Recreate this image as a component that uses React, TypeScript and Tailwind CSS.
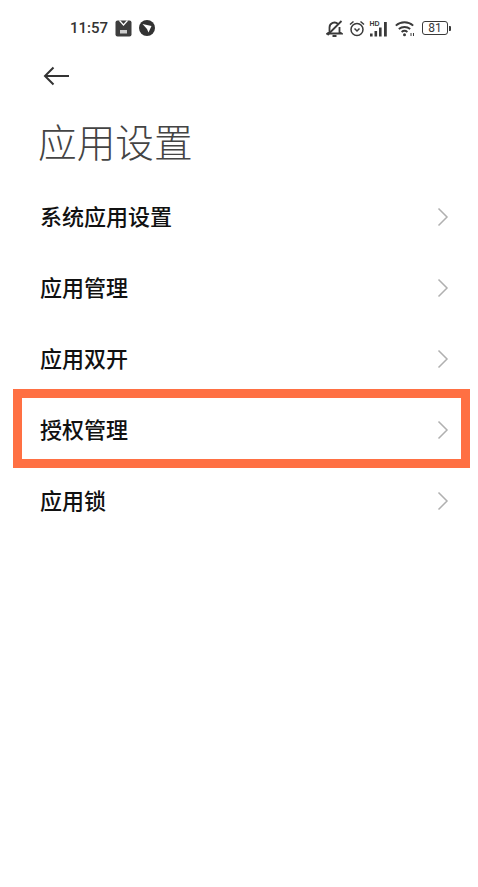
const CJK = 'font-["Noto_Sans_CJK_SC",sans-serif]';

function Chevron() {
  return (
    <svg width="12" height="20" viewBox="0 0 12 20" fill="none" className="mt-[4px] shrink-0">
      <path d="M1.5 1.5 L10 10 L1.5 18.5" stroke="#b0b0b0" strokeWidth="1.5" />
    </svg>
  );
}

function Row({ label, boxed }: { label: string; boxed?: boolean }) {
  const row = (
    <div className="flex h-[71px] items-center justify-between pl-10 pr-[29px]">
      <span className={`${CJK} text-[22px] leading-none font-medium text-[#111]`}>{label}</span>
      <Chevron />
    </div>
  );
  if (!boxed) return row;
  return (
    <div className="relative">
      {row}
      <div className="absolute left-[13px] top-[-3px] h-[79px] w-[457px] border-[9px] border-[#ff7043]" />
    </div>
  );
}

export default function App() {
  return (
    <div className="h-[887px] w-[478px] overflow-hidden bg-white">
      <div className="flex h-[56px] items-center justify-between pl-[70px] pr-[27px]">
        <div className="flex items-center">
          <span className='font-["Roboto",sans-serif] text-[15px] leading-none font-medium text-[#333]'>11:57</span>
          <svg width="17" height="17" viewBox="0 0 17 17" className="ml-[7px]">
            <rect x="0.5" y="0.5" width="16" height="16" rx="2" fill="#3d3d3d" />
            <path d="M4.5 0.5 L8.5 5 L12.5 0.5" stroke="#fff" strokeWidth="1.2" fill="none" />
            <rect x="5" y="10" width="7" height="3.5" fill="#ccc" />
          </svg>
          <svg width="16" height="16" viewBox="0 0 16 16" className="ml-[7px]">
            <circle cx="8" cy="8" r="8" fill="#333" />
            <path d="M3.5 4 L12.5 6 L9.5 12.5 L8 9 Z" fill="#fff" />
          </svg>
        </div>
        <div className="flex items-center">
          <svg width="17" height="17" viewBox="0 0 17 17" fill="none" stroke="#3a3a3a" strokeWidth="1.8">
            <path d="M3.5 12 V7.5 a5 5 0 0 1 8.5 -3.5 M13.5 7 v5 l2 1.5 H1.5 L3.5 12 M6.5 16 h4" />
            <path d="M1.5 15 L15.5 1" />
          </svg>
          <svg width="16" height="17" viewBox="0 0 16 17" fill="none" stroke="#3a3a3a" strokeWidth="1.5" className="ml-[6px]">
            <circle cx="8" cy="9.5" r="6" />
            <path d="M5.5 8.5 L8 11 L10.5 8.5" />
            <path d="M1 4.5 L4.5 1.5 M15 4.5 L11.5 1.5" />
          </svg>
          <svg width="20" height="17" viewBox="0 0 20 17" className="ml-[4px]">
            <text x="0.5" y="6" fontSize="7" fontWeight="700" fill="#3a3a3a" fontFamily="Liberation Sans">HD</text>
            <rect x="1" y="13.5" width="2.6" height="3" fill="#3a3a3a" />
            <rect x="5.5" y="11" width="2.6" height="5.5" fill="#3a3a3a" />
            <rect x="10" y="7.5" width="2.6" height="9" fill="#3a3a3a" />
            <rect x="15" y="2" width="2.8" height="14.5" fill="#3a3a3a" />
          </svg>
          <svg width="20" height="17" viewBox="0 0 20 17" fill="none" stroke="#3a3a3a" strokeWidth="1.9" className="ml-[6px]">
            <path d="M0.8 5.6 a13 13 0 0 1 17.4 0" />
            <path d="M3.8 9 a9 9 0 0 1 11.4 0" />
            <path d="M6.6 12 a4.5 4.5 0 0 1 5.8 0" />
            <circle cx="9.5" cy="14.8" r="1.5" fill="#3a3a3a" stroke="none" />
            <path d="M16 13 v3 M18.5 13 v3" strokeWidth="1" />
          </svg>
          <div className="ml-[7px] flex items-center">
            <div className='flex h-[14px] w-[26px] items-center justify-center rounded-[3px] border-[1.5px] border-[#3a3a3a] font-["Roboto",sans-serif] text-[12px] leading-none text-[#3a3a3a]'>81</div>
            <div className="ml-[1px] h-[5px] w-[2px] rounded-r-[1px] bg-[#3a3a3a]" />
          </div>
        </div>
      </div>
      <div className="pl-[43px] pt-[10px]">
        <svg width="27" height="20" viewBox="0 0 27 20" fill="none" stroke="#333" strokeWidth="2" className="block">
          <path d="M26 10 H2 M10.5 1.5 L2 10 L10.5 18.5" />
        </svg>
      </div>
      <div className={`${CJK} mt-[26px] pl-[38px] text-[38.7px] leading-[56px] font-light text-[#444]`}>应用设置</div>
      <div className="mt-[11px]">
        <Row label="系统应用设置" />
        <Row label="应用管理" />
        <Row label="应用双开" />
        <Row label="授权管理" boxed />
        <Row label="应用锁" />
      </div>
    </div>
  );
}
